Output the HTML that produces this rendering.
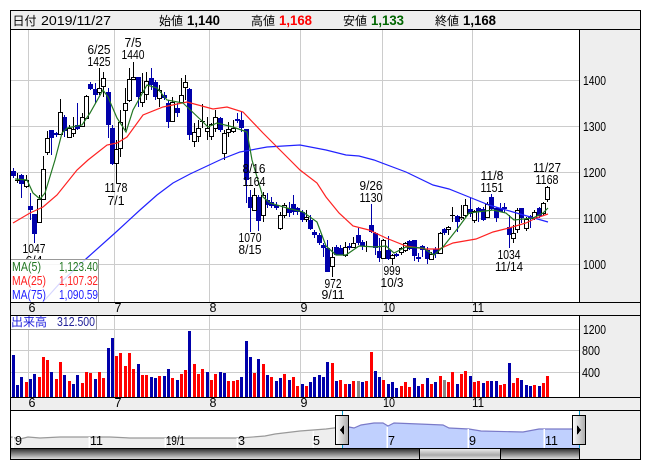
<!DOCTYPE html>
<html lang="ja"><head><meta charset="utf-8"><title>chart</title>
<style>
html,body{margin:0;padding:0;background:#fff;width:652px;height:469px;overflow:hidden}
svg{display:block}
text{font-family:"Liberation Sans","Noto Sans CJK JP",sans-serif;font-size:12.5px;fill:#000}
.c{text-anchor:middle}
.h{font-size:13px}
.b{font-size:14px;font-weight:bold}
.j{font-size:12px}
</style></head><body>
<svg width="652" height="469" viewBox="0 0 652 469" xmlns="http://www.w3.org/2000/svg" shape-rendering="crispEdges">
<defs>
<linearGradient id="sb" x1="0" y1="0" x2="0" y2="1"><stop offset="0" stop-color="#333"/><stop offset=".5" stop-color="#888"/><stop offset="1" stop-color="#ddd"/></linearGradient>
<linearGradient id="th" x1="0" y1="0" x2="0" y2="1"><stop offset="0" stop-color="#eee"/><stop offset=".6" stop-color="#aaa"/><stop offset="1" stop-color="#eee"/></linearGradient>
<linearGradient id="hd" x1="0" y1="0" x2="1" y2="0"><stop offset="0" stop-color="#fff"/><stop offset="1" stop-color="#aaa"/></linearGradient>
<clipPath id="cl"><rect x="0" y="0" width="100" height="259"/></clipPath>
</defs>
<rect x="10" y="10" width="631" height="450" fill="#fff"/>
<rect x="10" y="10" width="631" height="19" fill="#eee"/>
<rect x="580" y="29" width="60" height="431" fill="#eee"/>
<rect x="10" y="302" width="570" height="13" fill="#eee"/>
<rect x="10" y="397" width="570" height="13" fill="#eee"/>
<rect x="580" y="302" width="60" height="13" fill="#eee"/>
<rect x="580" y="397" width="60" height="13" fill="#eee"/>

<!-- grid -->
<path d="M11 80.5H579M11 126.5H579M11 172.5H579M11 218.5H579M11 264.5H579M28.5 30V302M114.5 30V302M209.5 30V302M300.5 30V302M382.5 30V302M472.5 30V302M11 329.5H579M11 350.5H579M11 372.5H579M28.5 316V397M114.5 316V397M209.5 316V397M300.5 316V397M382.5 316V397M472.5 316V397" stroke="#ccc" stroke-width="1" fill="none"/>

<!-- blue wicks -->
<path stroke="#0000aa" stroke-width="1" fill="none" d="M13.5 168V178M21.5 174V198M30.5 193V220M34.5 214V243M51.5 130V155M56.5 132V137M64.5 115V137M77.5 103V130M90.5 82V90M95.5 83V103M108.5 88V138M112.5 125V165M138.5 77V107M151.5 68V90M155.5 80V100M164.5 92V100M168.5 100V128M177.5 103V117M189.5 88V140M220.5 117V132M237.5 113V123M241.5 112V132M246.5 129V203M250.5 190V232M258.5 195V231M267.5 193V208M271.5 197V208M276.5 202V210M289.5 202V217M293.5 195V215M297.5 207V215M302.5 210V222M310.5 215V230M314.5 230V238M319.5 233V245M323.5 243V257M327.5 240V272M336.5 245V255M340.5 245V255M349.5 243V250M358.5 228V245M362.5 240V250M371.5 204V233M375.5 232V255M379.5 238V262M388.5 236V260M396.5 253V257M409.5 240V250M414.5 240V261M418.5 253V262M422.5 245V257M427.5 247V264M435.5 247V258M444.5 228V235M457.5 215V232M470.5 198V217M478.5 207V222M483.5 207V221M491.5 194V210M496.5 207V222M500.5 203V212M504.5 203V213M509.5 215V248M521.5 208V223M530.5 215V228M539.5 207V218"/>
<!-- blue bodies -->
<path stroke="#0000aa" stroke-width="5" fill="none" d="M13.5 171V176M21.5 175V184M30.5 206V210M34.5 214V234M51.5 130V138M56.5 133V135M64.5 117V131M77.5 125V129M90.5 84V89M95.5 89V95M108.5 92V125M112.5 128V164M138.5 77V97M151.5 78V85M155.5 82V97M164.5 95V98M168.5 103V122M177.5 108V113M189.5 89V135M220.5 118V130M237.5 119V121M241.5 120V128M246.5 129V180M250.5 197V208M258.5 197V221M267.5 200V205M271.5 202V206M276.5 205V208M289.5 208V213M293.5 204V212M297.5 208V212M302.5 212V220M310.5 220V229M314.5 232V235M319.5 235V243M323.5 245V248M327.5 248V272M336.5 247V255M340.5 248V255M349.5 246V248M358.5 235V243M362.5 242V246M371.5 225V232M375.5 233V248M379.5 251V258M388.5 250V259M396.5 254V256M409.5 241V249M414.5 240V256M418.5 257V259M422.5 246V250M427.5 250V259M435.5 249V254M444.5 229V233M457.5 216V222M470.5 209V214M478.5 208V212M483.5 209V220M491.5 197V209M496.5 208V218M500.5 208V212M504.5 207V209M509.5 227V235M521.5 208V218M530.5 216V219M539.5 208V216"/>
<!-- black wicks -->
<path stroke="#000" stroke-width="1" fill="none" d="M26.5 175V188M39.5 195V222M43.5 156V199M47.5 131V155M60.5 99V134M69.5 125V137M73.5 117V137M82.5 113V127M86.5 95V119M99.5 68V95M103.5 72V97M116.5 140V183M120.5 110V157M125.5 88V130M129.5 68V102M133.5 62V80M142.5 73V107M146.5 72V100M159.5 85V107M172.5 97V122M181.5 78V103M185.5 75V100M194.5 123V147M198.5 120V142M207.5 117V140M211.5 123V140M215.5 110V132M224.5 130V160M228.5 122V137M233.5 120V133M254.5 188V210M263.5 192V222M280.5 212V230M284.5 203V218M306.5 210V222M332.5 247V277M345.5 242V257M353.5 237V248M383.5 239V259M392.5 254V265M401.5 247V255M405.5 242V252M431.5 252V260M440.5 232V254M448.5 226V235M461.5 205V220M465.5 199V217M474.5 210V223M487.5 202V218M513.5 225V243M517.5 208V233M526.5 217V231M534.5 210V220M543.5 202V215M547.5 186V202M17.5 173V183M202.5 104V128M366.5 241V252M452.5 207V222M15 180.5H20M200 121.5H205M364 246.5H369M450 215.5H455"/>
<!-- white bodies outline -->
<path stroke="#000" stroke-width="5" fill="none" d="M26.5 180V187M39.5 199V223M43.5 169V200M47.5 138V153M60.5 112V135M69.5 128V138M73.5 129V134M82.5 117V127M86.5 96V119M99.5 88V93M103.5 78V87M116.5 149V164M120.5 122V149M125.5 103V111M129.5 79V101M133.5 77V80M142.5 92V103M146.5 81V95M159.5 90V99M172.5 102V122M181.5 95V103M185.5 82V88M194.5 132V142M198.5 128V137M207.5 128V132M211.5 124V137M215.5 117V129M224.5 133V154M228.5 129V133M233.5 128V132M254.5 195V211M263.5 195V216M280.5 215V229M284.5 205V216M306.5 217V220M332.5 257V267M345.5 247V256M353.5 243V248M383.5 240V259M392.5 255V259M401.5 248V253M405.5 243V251M431.5 254V260M440.5 233V254M448.5 227V230M461.5 217V219M465.5 205V216M474.5 211V221M487.5 204V218M513.5 233V239M517.5 210V230M526.5 219V229M534.5 212V219M543.5 203V214M547.5 187V200"/>
<path stroke="#fff" stroke-width="3" fill="none" d="M26.5 181V186M39.5 200V222M43.5 170V199M47.5 139V152M60.5 113V134M69.5 129V137M73.5 130V133M82.5 118V126M86.5 97V118M99.5 89V92M103.5 79V86M116.5 150V163M120.5 123V148M125.5 104V110M129.5 80V100M133.5 78V79M142.5 93V102M146.5 82V94M159.5 91V98M172.5 103V121M181.5 96V102M185.5 83V87M194.5 133V141M198.5 129V136M207.5 129V131M211.5 125V136M215.5 118V128M224.5 134V153M228.5 130V132M233.5 129V131M254.5 196V210M263.5 196V215M280.5 216V228M284.5 206V215M306.5 218V219M332.5 258V266M345.5 248V255M353.5 244V247M383.5 241V258M392.5 256V258M401.5 249V252M405.5 244V250M431.5 255V259M440.5 234V253M448.5 228V229M461.5 218V218.5M465.5 206V215M474.5 212V220M487.5 205V217M513.5 234V238M517.5 211V229M526.5 220V228M534.5 213V218M543.5 204V213M547.5 188V199"/>

<!-- moving averages -->
<g fill="none" stroke-width="1.2" shape-rendering="auto">
<polyline stroke="#2222ff" points="43,302 60,283 87,258 115,233 140,210 157,195 173,183 190,174 222,159 240,152 267,147 300,145 326,150 346,155 359,156 374,160 406,172 433,185 449,189 469,197 489,205 513,212 548,222"/>
<polyline stroke="#ff2222" points="13,223 30,213 43,207 57,195 77,170 88,160 107,145 117,143 127,137 143,115 163,107 187,102 213,109 227,107 243,112 263,133 277,147 290,160 300,170 317,183 326,197 339,213 353,226 369,230 386,238 406,246 426,249 439,249 453,243 476,239 493,232 509,228 526,223 536,218 548,214"/>
<polyline stroke="#227722" points="15,179 27,180 33,193 40,199 45,193 55,160 62,133 67,128 82,125 90,113 103,90 108,97 117,118 126,132 133,110 147,85 157,88 167,100 183,103 203,122 208,127 217,123 233,127 247,132 252,160 263,197 270,203 287,208 303,212 317,222 326,246 336,255 346,255 359,246 376,247 386,246 394,253 406,247 423,248 434,255 443,247 458,228 469,213 493,210 506,213 514,220 533,218 543,213 548,208"/>
</g>

<!-- chart labels -->
<g shape-rendering="auto">
<text class="c" x="99" y="54" textLength="23" lengthAdjust="spacingAndGlyphs">6/25</text>
<text class="c" x="99" y="66" textLength="23" lengthAdjust="spacingAndGlyphs">1425</text>
<text class="c" x="133" y="47" textLength="17" lengthAdjust="spacingAndGlyphs">7/5</text>
<text class="c" x="133" y="59" textLength="23" lengthAdjust="spacingAndGlyphs">1440</text>
<text class="c" x="116" y="192" textLength="23" lengthAdjust="spacingAndGlyphs">1178</text>
<text class="c" x="116" y="205" textLength="17" lengthAdjust="spacingAndGlyphs">7/1</text>
<text class="c" x="254" y="173" textLength="23" lengthAdjust="spacingAndGlyphs">8/16</text>
<text class="c" x="254" y="186" textLength="23" lengthAdjust="spacingAndGlyphs">1164</text>
<text class="c" x="250" y="242" textLength="23" lengthAdjust="spacingAndGlyphs">1070</text>
<text class="c" x="250" y="254" textLength="23" lengthAdjust="spacingAndGlyphs">8/15</text>
<text class="c" x="333" y="288" textLength="17" lengthAdjust="spacingAndGlyphs">972</text>
<text class="c" x="333" y="299" textLength="23" lengthAdjust="spacingAndGlyphs">9/11</text>
<text class="c" x="371" y="190" textLength="23" lengthAdjust="spacingAndGlyphs">9/26</text>
<text class="c" x="371" y="202" textLength="23" lengthAdjust="spacingAndGlyphs">1130</text>
<text class="c" x="392" y="275" textLength="17" lengthAdjust="spacingAndGlyphs">999</text>
<text class="c" x="392" y="287" textLength="23" lengthAdjust="spacingAndGlyphs">10/3</text>
<text class="c" x="492" y="180" textLength="23" lengthAdjust="spacingAndGlyphs">11/8</text>
<text class="c" x="492" y="192" textLength="23" lengthAdjust="spacingAndGlyphs">1151</text>
<text class="c" x="509" y="259" textLength="23" lengthAdjust="spacingAndGlyphs">1034</text>
<text class="c" x="509" y="271" textLength="28" lengthAdjust="spacingAndGlyphs">11/14</text>
<text class="c" x="547" y="172" textLength="28" lengthAdjust="spacingAndGlyphs">11/27</text>
<text class="c" x="547" y="184" textLength="23" lengthAdjust="spacingAndGlyphs">1168</text>
<text class="c" x="34" y="253" textLength="23" lengthAdjust="spacingAndGlyphs">1047</text>
<text class="c" x="34" y="265" textLength="17" lengthAdjust="spacingAndGlyphs" clip-path="url(#cl)">6/4</text>
</g>

<!-- MA legend -->
<rect x="10.5" y="259.5" width="88" height="43" fill="#fff" fill-opacity=".82" stroke="#999"/>
<g shape-rendering="auto">
<text x="12" y="271" style="fill:#227722" textLength="29" lengthAdjust="spacingAndGlyphs">MA(5)</text>
<text x="59" y="271" style="fill:#227722" textLength="39" lengthAdjust="spacingAndGlyphs">1,123.40</text>
<text x="12" y="285" style="fill:#ff2222" textLength="34" lengthAdjust="spacingAndGlyphs">MA(25)</text>
<text x="59" y="285" style="fill:#ff2222" textLength="39" lengthAdjust="spacingAndGlyphs">1,107.32</text>
<text x="12" y="299" style="fill:#2222ff" textLength="34" lengthAdjust="spacingAndGlyphs">MA(75)</text>
<text x="59" y="299" style="fill:#2222ff" textLength="39" lengthAdjust="spacingAndGlyphs">1,090.59</text>
</g>

<!-- volume -->
<path stroke="#0000aa" stroke-width="3" fill="none" d="M13.5 397V355M17.5 397V385M21.5 397V377M30.5 397V379M34.5 397V374M51.5 397V372M64.5 397V375M73.5 397V384M77.5 397V375M95.5 397V379M108.5 397V348M112.5 397V338M138.5 397V364M151.5 397V377M155.5 397V378M164.5 397V376M168.5 397V369M177.5 397V380M189.5 397V331M207.5 397V372M220.5 397V372M224.5 397V373M241.5 397V377M246.5 397V341M250.5 397V357M258.5 397V359M267.5 397V375M276.5 397V381M280.5 397V378M289.5 397V380M302.5 397V384M310.5 397V382M314.5 397V377M319.5 397V375M323.5 397V377M327.5 397V362M336.5 397V381M349.5 397V384M362.5 397V382M375.5 397V371M379.5 397V377M388.5 397V384M392.5 397V382M396.5 397V388M414.5 397V378M418.5 397V386M427.5 397V378M435.5 397V382M457.5 397V384M470.5 397V376M483.5 397V383M491.5 397V381M496.5 397V381M509.5 397V363M521.5 397V380M526.5 397V385M530.5 397V386M539.5 397V386"/>
<path stroke="#ff0000" stroke-width="3" fill="none" d="M26.5 397V382M39.5 397V377M43.5 397V357M47.5 397V360M56.5 397V379M60.5 397V362M69.5 397V381M82.5 397V383M86.5 397V372M90.5 397V373M99.5 397V372M103.5 397V378M116.5 397V356M120.5 397V353M125.5 397V366M129.5 397V353M133.5 397V369M142.5 397V375M146.5 397V375M159.5 397V376M172.5 397V378M181.5 397V374M185.5 397V370M194.5 397V364M198.5 397V374M202.5 397V369M211.5 397V380M215.5 397V374M228.5 397V381M233.5 397V381M237.5 397V380M254.5 397V373M263.5 397V364M271.5 397V377M284.5 397V374M293.5 397V377M297.5 397V386M306.5 397V386M332.5 397V363M340.5 397V380M345.5 397V384M353.5 397V381M366.5 397V381M371.5 397V352M383.5 397V380M401.5 397V386M405.5 397V382M409.5 397V387M422.5 397V384M431.5 397V384M440.5 397V376M448.5 397V382M452.5 397V372M461.5 397V374M465.5 397V371M474.5 397V382M478.5 397V381M487.5 397V381M500.5 397V385M504.5 397V384M513.5 397V383M517.5 397V378M534.5 397V385M543.5 397V383M547.5 397V376"/>
<path stroke="#888" stroke-width="3" fill="none" d="M358.5 397V381M444.5 397V380"/>

<rect x="10.5" y="315.5" width="86" height="14" fill="#fff" stroke="#999"/>
<g shape-rendering="auto">
<text class="j" x="11" y="326" style="fill:#2222dd;font-size:12px">出来高</text>
<text x="57" y="326" style="fill:#222299" textLength="38" lengthAdjust="spacingAndGlyphs">312.500</text>
</g>

<!-- overview -->
<polygon fill="#eee" points="11,437 20,439 28,437 40,438 60,437 90,437 110,437 130,438 160,438 200,438 232,438 240,438 265,436 275,434 300,431 326,429 342,427 342,448 11,448"/>
<polyline fill="none" stroke="#999" stroke-width="1.2" shape-rendering="auto" points="11,437 20,439 28,437 40,438 60,437 90,437 110,437 130,438 160,438 200,438 232,438 240,438 265,436 275,434 300,431 326,429 342,427"/>
<polygon fill="#c0d0fe" points="342,427 349,427 354,428 361,425 374,423 383,423 388,426 394,423 419,424 443,425 449,428 469,429 481,431 523,432 539,429 573,429 579,429 579,448 342,448"/>
<polyline fill="none" stroke="#7a7ac8" stroke-width="1.2" shape-rendering="auto" points="342,427 349,427 354,428 361,425 374,423 383,423 388,426 394,423 419,424 443,425 449,428 469,429 481,431 523,432 539,429 573,429 579,429"/>
<path stroke="#fff" stroke-width="1.5" fill="none" d="M387 427V448M468 429V448M544 429V448M13 437V448M89 437V448M165 438V448M237 438V448M313 431V448"/>
<path stroke="#0a9ac8" stroke-width="1" fill="none" d="M342.5 411V448M579.5 411V448"/>
<g shape-rendering="auto">
<text x="15" y="445" textLength="7" lengthAdjust="spacingAndGlyphs">9</text>
<text x="90" y="445" textLength="13" lengthAdjust="spacingAndGlyphs">11</text>
<text x="166" y="445" textLength="19" lengthAdjust="spacingAndGlyphs">19/1</text>
<text x="238" y="445" textLength="7" lengthAdjust="spacingAndGlyphs">3</text>
<text x="313" y="445" textLength="7" lengthAdjust="spacingAndGlyphs">5</text>
<text x="388" y="445" textLength="7" lengthAdjust="spacingAndGlyphs">7</text>
<text x="469" y="445" textLength="7" lengthAdjust="spacingAndGlyphs">9</text>
<text x="545" y="445" textLength="13" lengthAdjust="spacingAndGlyphs">11</text>
</g>

<!-- scrollbar -->
<rect x="11" y="449" width="568" height="10" fill="url(#sb)"/>
<rect x="419.5" y="448.5" width="81" height="11" fill="url(#th)" stroke="#000"/>
<rect x="585" y="411" width="55" height="48" fill="#eee"/>
<rect x="580" y="449" width="6" height="10" fill="#eee"/>

<!-- frames -->
<path stroke="#000" stroke-width="1" fill="none" d="M10.5 10.5H640.5V459.5H10.5ZM10.5 29.5H640.5M10.5 302.5H640.5M10.5 315.5H640.5M10.5 397.5H640.5M10.5 410.5H640.5M10.5 448.5H579.5M579.5 29.5V302.5M579.5 315.5V397.5M579.5 448.5V459.5"/>

<!-- handles -->
<rect x="335.5" y="415.5" width="13" height="29" fill="url(#hd)" stroke="#000"/>
<polygon points="340,430 344,425 344,435" fill="#000"/>
<rect x="572.5" y="415.5" width="13" height="29" fill="url(#hd)" stroke="#000"/>
<polygon points="581,430 577,425 577,435" fill="#000"/>

<!-- header + axes text -->
<g shape-rendering="auto">
<text class="j" x="12.5" y="25">日付</text>
<text class="h" x="41" y="25" textLength="70" lengthAdjust="spacingAndGlyphs">2019/11/27</text>
<text class="j" x="159" y="25">始値</text>
<text class="b" x="187" y="25" textLength="33" lengthAdjust="spacingAndGlyphs">1,140</text>
<text class="j" x="251" y="25">高値</text>
<text class="b" x="279" y="25" textLength="33" lengthAdjust="spacingAndGlyphs" style="fill:#ff0000">1,168</text>
<text class="j" x="343" y="25">安値</text>
<text class="b" x="371" y="25" textLength="33" lengthAdjust="spacingAndGlyphs" style="fill:#006600">1,133</text>
<text class="j" x="435" y="25">終値</text>
<text class="b" x="463" y="25" textLength="33" lengthAdjust="spacingAndGlyphs">1,168</text>

<text x="583" y="85" textLength="23" lengthAdjust="spacingAndGlyphs">1400</text>
<text x="583" y="131" textLength="23" lengthAdjust="spacingAndGlyphs">1300</text>
<text x="583" y="177" textLength="23" lengthAdjust="spacingAndGlyphs">1200</text>
<text x="583" y="223" textLength="23" lengthAdjust="spacingAndGlyphs">1100</text>
<text x="583" y="269" textLength="23" lengthAdjust="spacingAndGlyphs">1000</text>
<text x="583" y="334" textLength="23" lengthAdjust="spacingAndGlyphs">1200</text>
<text x="582" y="355" textLength="18" lengthAdjust="spacingAndGlyphs">800</text>
<text x="582" y="377" textLength="18" lengthAdjust="spacingAndGlyphs">400</text>

<text class="c" x="32" y="312">6</text><text class="c" x="118" y="312">7</text><text class="c" x="213" y="312">8</text><text class="c" x="304" y="312">9</text><text class="c" x="389" y="312" textLength="12" lengthAdjust="spacingAndGlyphs">10</text><text class="c" x="478" y="312" textLength="12" lengthAdjust="spacingAndGlyphs">11</text>
<text class="c" x="32" y="407">6</text><text class="c" x="118" y="407">7</text><text class="c" x="213" y="407">8</text><text class="c" x="304" y="407">9</text><text class="c" x="389" y="407" textLength="12" lengthAdjust="spacingAndGlyphs">10</text><text class="c" x="478" y="407" textLength="12" lengthAdjust="spacingAndGlyphs">11</text>
</g>
</svg>
</body></html>
